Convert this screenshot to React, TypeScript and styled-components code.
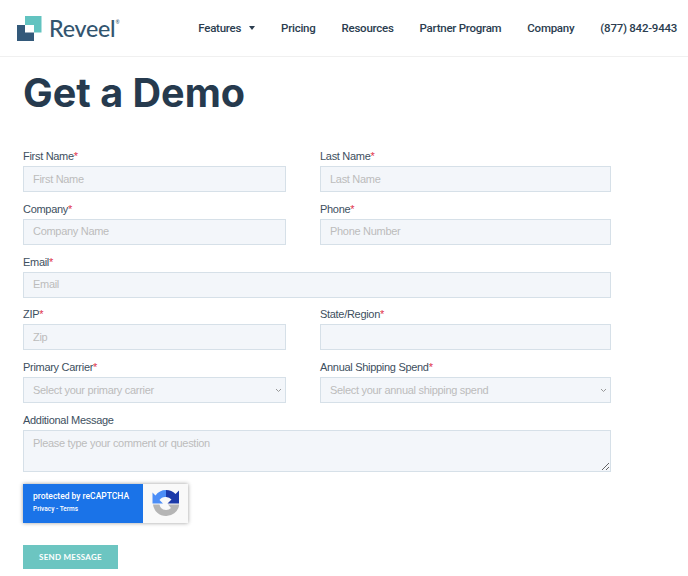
import { createGlobalStyle, styled } from 'styled-components';

const GlobalStyle = createGlobalStyle`
    html, body {
        margin: 0;
        padding: 0;
        background: #ffffff;
    }
    body {
        font-family: 'Liberation Sans', Arial, sans-serif;
        color: #33475b;
    }
`;

const Page = styled.div`
    width: 688px;
    height: 576px;
    overflow: hidden;
`;

const Header = styled.header`
    display: flex;
    align-items: center;
    height: 56px;
    padding: 0 11px 0 17px;
    border-bottom: 1px solid #f0f0f0;
    font-family: Lato, sans-serif;
`;

const Brand = styled.div`
    display: flex;
    align-items: center;
    gap: 7px;
    margin-right: auto;
`;

const BrandName = styled.span`
    font-size: 23.2px;
    font-weight: 500;
    letter-spacing: -0.2px;
    color: #33556f;

    sup {
        font-size: 5px;
        vertical-align: 13px;
        line-height: 0;
    }
`;

const Nav = styled.nav`
    display: flex;
    align-items: center;
    gap: 26px;
`;

const NavLink = styled.a`
    display: flex;
    align-items: center;
    gap: 8px;
    font-family: Roboto, sans-serif;
    font-size: 11.5px;
    font-weight: 500;
    letter-spacing: -0.25px;
    color: #2b3d4f;
`;

const Caret = styled.span`
    width: 0;
    height: 0;
    border-left: 3.5px solid transparent;
    border-right: 3.5px solid transparent;
    border-top: 4px solid #2b3d4f;
`;

const Main = styled.main`
    padding: 0 23px;
`;

const Title = styled.h1`
    margin: 10px 0 0;
    font-family: Inter, sans-serif;
    font-size: 39.6px;
    line-height: 52px;
    font-weight: 700;
    color: #263a4e;
`;

const Form = styled.form`
    display: grid;
    grid-template-columns: 263px 291px;
    column-gap: 34px;
    row-gap: 10.8px;
    margin-top: 31px;
    width: 588px;
`;

const Field = styled.label<{ $wide?: boolean }>`
    display: block;
    grid-column: ${p => (p.$wide ? '1 / -1' : 'auto')};
`;

const LabelText = styled.span`
    display: block;
    height: 16px;
    font-size: 11px;
    letter-spacing: -0.3px;
    line-height: 12px;
    color: #3d4f60;

    em {
        font-style: normal;
        color: #e0334c;
    }
`;

const controlStyles = `
    display: block;
    width: 100%;
    box-sizing: border-box;
    border: 1px solid #d6e0e8;
    border-radius: 0;
    background-color: #f3f6fa;
    font-family: 'Liberation Sans', Arial, sans-serif;
    font-size: 11px;
    letter-spacing: -0.3px;
    outline: none;
`;

const TextInput = styled.input`
    ${controlStyles}
    height: 26px;
    padding: 0 9px 1px;

    &::placeholder {
        color: #bcbcbc;
        opacity: 1;
    }
`;

const chevron =
    "data:image/svg+xml,%3Csvg xmlns='http://www.w3.org/2000/svg' width='7' height='5'%3E%3Cpath d='M1 1l2.5 2.5L6 1' fill='none' stroke='%23999' stroke-width='1'/%3E%3C/svg%3E";

const Select = styled.select`
    ${controlStyles}
    height: 26px;
    padding: 0 9px;
    color: #bcbcbc;
    appearance: none;
    background-image: url("${chevron}");
    background-repeat: no-repeat;
    background-position: right 3px center;
`;

const TextArea = styled.textarea`
    ${controlStyles}
    height: 42px;
    padding: 6px 9px;

    &::placeholder {
        color: #bcbcbc;
        opacity: 1;
    }
`;

const Recaptcha = styled.div`
    display: flex;
    width: 165px;
    height: 39px;
    margin-top: 12px;
    box-shadow: 0 0 4px rgba(0, 0, 0, 0.4);
`;

const RecaptchaText = styled.div`
    display: flex;
    flex-direction: column;
    justify-content: center;
    gap: 4px;
    width: 120px;
    box-sizing: border-box;
    padding: 0 0 2px 10px;
    background: #1a73e8;
    color: #ffffff;
    font-family: Roboto, sans-serif;
    font-size: 8.5px;
    font-weight: 500;
`;

const RecaptchaLinks = styled.span`
    font-size: 6.5px;
`;

const RecaptchaLogo = styled.div`
    display: flex;
    align-items: center;
    justify-content: center;
    flex: 1;
    background: #f9f9f9;
`;

const SendButton = styled.button`
    display: block;
    width: 95px;
    height: 24px;
    margin-top: 22px;
    padding: 0;
    border: 0;
    background: #6cc5c1;
    color: #ffffff;
    font-family: Lato, sans-serif;
    font-size: 8px;
    font-weight: 700;
    letter-spacing: 0.25px;
`;

const Logo = () => (
    <svg width="25" height="25" viewBox="0 0 25 25">
        <rect x="8" y="0" width="16.5" height="16.5" fill="#62c3c0" />
        <rect x="0" y="9" width="17" height="16" fill="#33597a" />
        <rect x="8" y="9" width="9" height="7.5" fill="#ffffff" />
    </svg>
);

const RecaptchaIcon = () => (
    <svg width="28" height="28" viewBox="0 0 28 28">
        <path d="M14 1 A13 13 0 0 0 3.5 6.5 L0.5 3.5 L0.5 14.5 L11 14.5 L7.5 11 A7 7 0 0 1 14 8 Z" fill="#4c8ef7" />
        <path d="M14 1 A13 13 0 0 1 23.5 5 L27 1.5 L27 14.5 L15.5 14.5 L19.5 10.5 A7 7 0 0 0 14 8 Z" fill="#1c3aa9" />
        <path d="M1 15.5 L7.5 15.5 A6.8 6.8 0 0 0 14 21 A6.8 6.8 0 0 0 19 19 L16 15.5 L27 15.5 L27 17 A13 13 0 0 1 14 27 A13 13 0 0 1 1 15.5 Z" fill="#b5b5b5" />
    </svg>
);

const Required = ({ children }: { children: string }) => (
    <LabelText>
        {children}
        <em>*</em>
    </LabelText>
);

const App = () => (
    <Page>
        <GlobalStyle />
        <Header>
            <Brand>
                <Logo />
                <BrandName>
                    Reveel<sup>®</sup>
                </BrandName>
            </Brand>
            <Nav>
                <NavLink>
                    Features <Caret />
                </NavLink>
                <NavLink>Pricing</NavLink>
                <NavLink>Resources</NavLink>
                <NavLink>Partner Program</NavLink>
                <NavLink>Company</NavLink>
                <NavLink>(877) 842-9443</NavLink>
            </Nav>
        </Header>
        <Main>
            <Title>Get a Demo</Title>
            <Form>
                <Field>
                    <Required>First Name</Required>
                    <TextInput placeholder="First Name" />
                </Field>
                <Field>
                    <Required>Last Name</Required>
                    <TextInput placeholder="Last Name" />
                </Field>
                <Field>
                    <Required>Company</Required>
                    <TextInput placeholder="Company Name" />
                </Field>
                <Field>
                    <Required>Phone</Required>
                    <TextInput placeholder="Phone Number" />
                </Field>
                <Field $wide>
                    <Required>Email</Required>
                    <TextInput placeholder="Email" />
                </Field>
                <Field>
                    <Required>ZIP</Required>
                    <TextInput placeholder="Zip" />
                </Field>
                <Field>
                    <Required>State/Region</Required>
                    <TextInput />
                </Field>
                <Field>
                    <Required>Primary Carrier</Required>
                    <Select>
                        <option>Select your primary carrier</option>
                    </Select>
                </Field>
                <Field>
                    <Required>Annual Shipping Spend</Required>
                    <Select>
                        <option>Select your annual shipping spend</option>
                    </Select>
                </Field>
                <Field $wide>
                    <LabelText>Additional Message</LabelText>
                    <TextArea placeholder="Please type your comment or question" />
                </Field>
            </Form>
            <Recaptcha>
                <RecaptchaText>
                    <span>protected by reCAPTCHA</span>
                    <RecaptchaLinks>Privacy - Terms</RecaptchaLinks>
                </RecaptchaText>
                <RecaptchaLogo>
                    <RecaptchaIcon />
                </RecaptchaLogo>
            </Recaptcha>
            <SendButton type="button">SEND MESSAGE</SendButton>
        </Main>
    </Page>
);

export default App;
